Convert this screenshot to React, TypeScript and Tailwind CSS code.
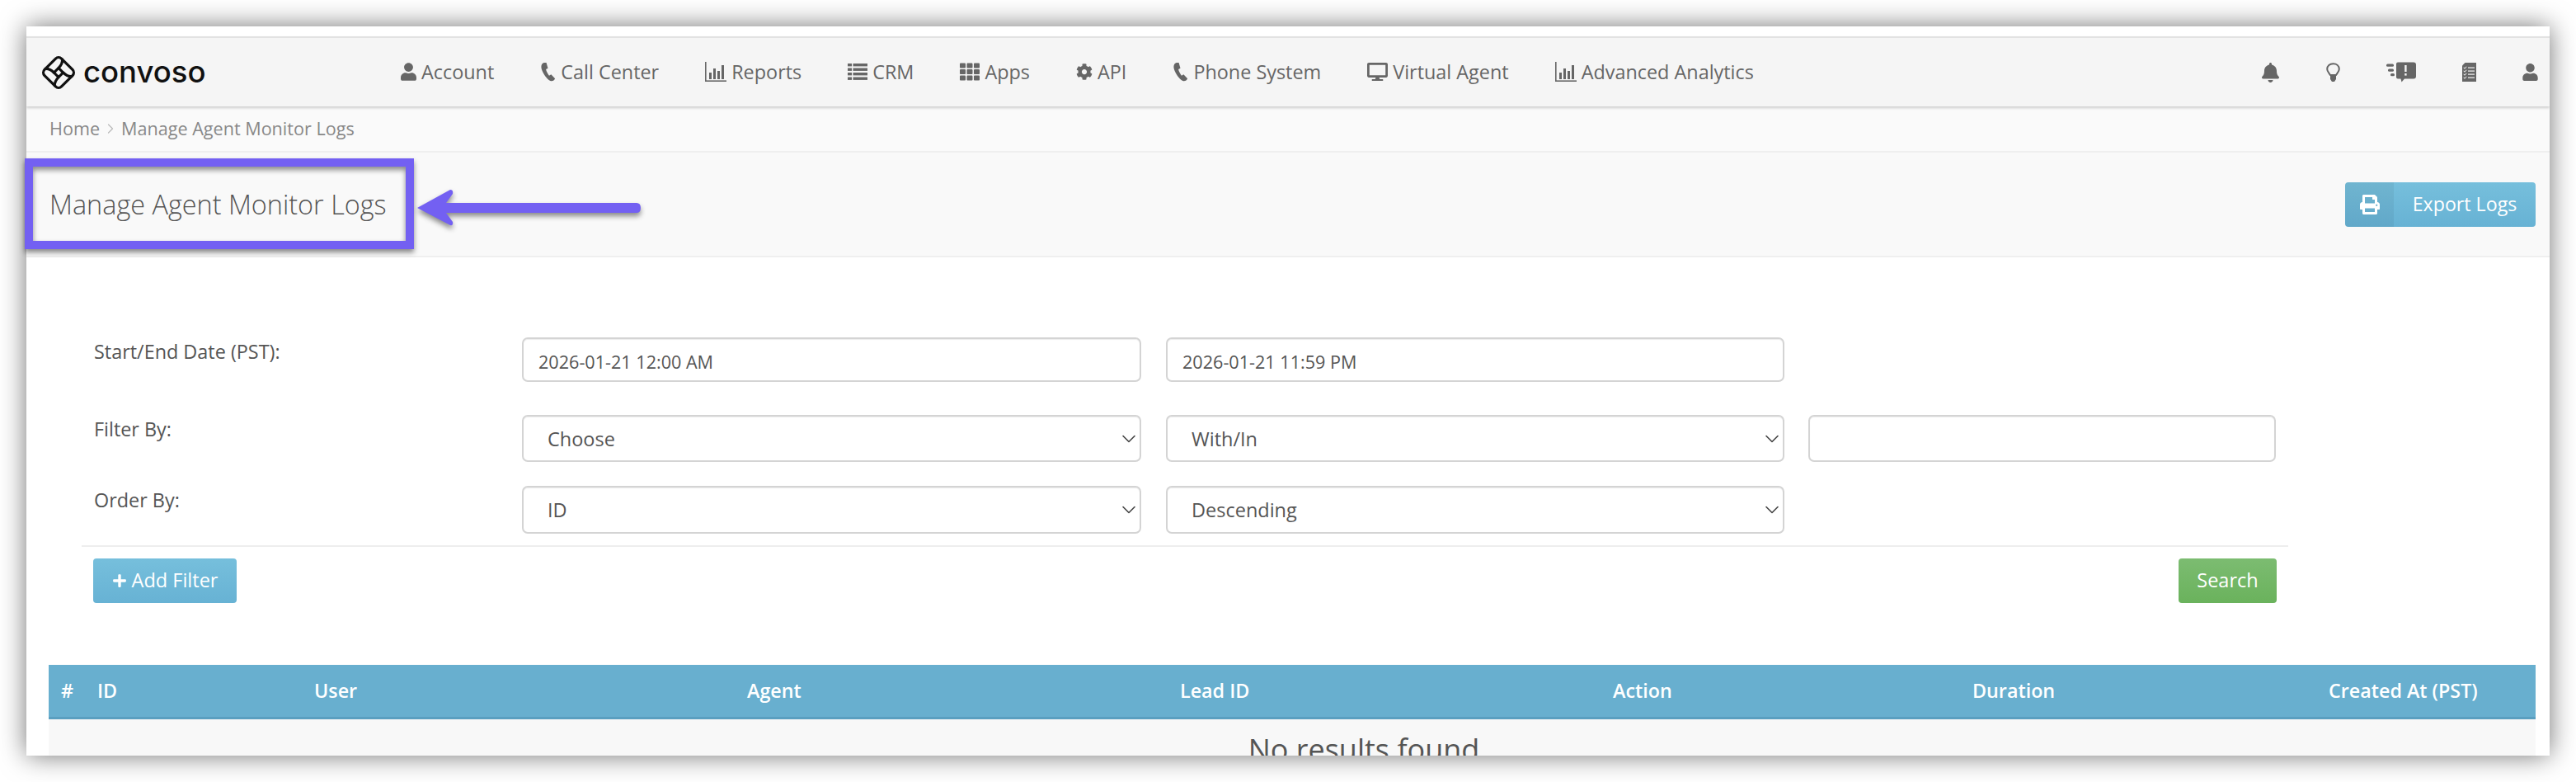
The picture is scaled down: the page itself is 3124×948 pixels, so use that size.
import {
  FaBell,
  FaCog,
  FaDesktop,
  FaPlus,
  FaPrint,
  FaTh,
  FaUser,
} from "react-icons/fa";
import { ChevronDown, ChevronRight } from "lucide-react";
import type { ComponentType } from "react";

type NavItem = {
  label: string;
  icon: ComponentType<{ className?: string }>;
  size: string;
};

function ListIcon({ className }: { className?: string }) {
  return (
    <svg viewBox="0 0 24 20" className={className} fill="currentColor">
      <rect x="0" y="0" width="5" height="3.4" />
      <rect x="6.5" y="0" width="17.5" height="3.4" />
      <rect x="0" y="5.5" width="5" height="3.4" />
      <rect x="6.5" y="5.5" width="17.5" height="3.4" />
      <rect x="0" y="11" width="5" height="3.4" />
      <rect x="6.5" y="11" width="17.5" height="3.4" />
      <rect x="0" y="16.5" width="5" height="3.4" />
      <rect x="6.5" y="16.5" width="17.5" height="3.4" />
    </svg>
  );
}

function BarsIcon({ className }: { className?: string }) {
  return (
    <svg viewBox="0 0 26 24" className={className} fill="currentColor">
      <rect x="0" y="0" width="1.6" height="24" />
      <rect x="0" y="22.4" width="26" height="1.6" />
      <rect x="5" y="13" width="3" height="8" />
      <rect x="10" y="8" width="3" height="13" />
      <rect x="15" y="11" width="3" height="10" />
      <rect x="20" y="4" width="3" height="17" />
    </svg>
  );
}

function CallIcon({ className }: { className?: string }) {
  return (
    <svg viewBox="0 0 18 25" className={className} fill="currentColor">
      <path d="M4 1 C1 2 0 5 1 9 C3 15 7 21 12 24 C15 25 17 23 18 21 L13 16 L10.5 17.5 C8.5 15 7 12 6.5 9.5 L9 8 L7 1 Z" />
    </svg>
  );
}

const navItems: NavItem[] = [
  { label: "Account", icon: FaUser, size: "h-[24px] w-[19px]" },
  { label: "Call Center", icon: CallIcon, size: "h-[24px] w-[19px]" },
  { label: "Reports", icon: BarsIcon, size: "h-[24px] w-[26px]" },
  { label: "CRM", icon: ListIcon, size: "h-[20px] w-[24px]" },
  { label: "Apps", icon: FaTh, size: "h-[24px] w-[24px]" },
  { label: "API", icon: FaCog, size: "h-[22px] w-[20px]" },
  { label: "Phone System", icon: CallIcon, size: "h-[24px] w-[19px]" },
  { label: "Virtual Agent", icon: FaDesktop, size: "h-[26px] w-[25px]" },
  { label: "Advanced Analytics", icon: BarsIcon, size: "h-[24px] w-[26px]" },
];

const columns = ["#", "ID", "User", "Agent", "Lead ID", "Action", "Duration", "Created At (PST)"];

function Logo() {
  return (
    <svg viewBox="0 0 44 44" className="h-[44px] w-[44px] shrink-0" fill="none" stroke="#111" strokeWidth="3.2" strokeLinecap="round">
      <g transform="rotate(45 22 22)">
        <rect x="7.5" y="7.5" width="29" height="29" rx="5" />
        <rect x="18" y="18" width="8" height="8" rx="1" />
        <path d="M18 18 C18 14 17 10 14 7.5" />
        <path d="M26 18 C30 18 34 17 36.5 14" />
        <path d="M26 26 C26 30 27 34 30 36.5" />
        <path d="M18 26 C14 26 10 27 7.5 30" />
      </g>
    </svg>
  );
}

function BulbIcon() {
  return (
    <svg viewBox="0 0 17 24" className="h-[24px] w-[17px]" fill="none" stroke="#666" strokeWidth="2">
      <path d="M5 15 C3 12 1.2 10.5 1.2 7.8 C1.2 3.8 4.4 1.2 8.5 1.2 C12.6 1.2 15.8 3.8 15.8 7.8 C15.8 10.5 14 12 12 15 Z" />
      <path d="M5 15 H12 V20 L10 23 H7 L5 20 Z" fill="#666" stroke="none" />
    </svg>
  );
}

function AlertsIcon() {
  return (
    <svg viewBox="0 0 36 25" className="h-[25px] w-[36px]" fill="#666">
      <rect x="0" y="2.5" width="9" height="3.2" rx="1.5" />
      <rect x="2" y="8.5" width="7" height="3.2" rx="1.5" />
      <rect x="5" y="14" width="5" height="3.2" rx="1.5" />
      <path d="M14 0.5h19a3 3 0 0 1 3 3v14a3 3 0 0 1-3 3H22l-3.5 4-1-4H14a2 2 0 0 1-2-2V2.5a2 2 0 0 1 2-2z" />
      <rect x="22.2" y="4" width="2.4" height="8" fill="#f5f5f5" />
      <rect x="22.2" y="14" width="2.4" height="2.6" fill="#f5f5f5" />
    </svg>
  );
}

function TasksIcon() {
  return (
    <svg viewBox="0 0 17 23" className="h-[23px] w-[17px]" fill="#666">
      <path d="M3.5 0H17v23H0V3.5z" />
      <g fill="#f5f5f5">
        <rect x="7" y="5.5" width="8" height="1.2" />
        <rect x="7" y="9.5" width="8" height="1.2" />
        <rect x="7" y="13.5" width="8" height="1.2" />
        <rect x="7" y="17.5" width="8" height="1.2" />
        <path d="M2 5.5l1 1 2-2 .6.6L3 7.8 1.4 6.1z" />
        <path d="M2 9.5l1 1 2-2 .6.6L3 11.8 1.4 10.1z" />
        <path d="M2 13.5l1 1 2-2 .6.6L3 15.8 1.4 14.1z" />
        <path d="M2 17.5l1 1 2-2 .6.6L3 19.8 1.4 18.1z" />
      </g>
    </svg>
  );
}

function Select({ value, className }: { value: string; className: string }) {
  return (
    <div className={`relative ${className}`}>
      <select
        defaultValue={value}
        className="h-full w-full appearance-none rounded-[7px] border-2 border-[#d4d4d4] bg-white pb-[1px] pl-[29px] pt-[3px] text-[23.5px] text-[#555] shadow-[inset_0_1px_1px_rgba(0,0,0,0.075)] outline-none"
      >
        <option>{value}</option>
      </select>
      <ChevronDown className="pointer-events-none absolute right-[1px] top-1/2 h-[28px] w-[28px] -translate-y-1/2 text-[#444]" strokeWidth={1.4} />
    </div>
  );
}

function TextInput({ value, className }: { value?: string; className: string }) {
  return (
    <input
      readOnly
      value={value ?? ""}
      className={`rounded-[7px] border-2 border-[#d4d4d4] bg-white pl-[18px] pt-[4px] text-[21.6px] text-[#555] shadow-[inset_0_1px_1px_rgba(0,0,0,0.075)] outline-none ${className}`}
    />
  );
}

export default function App() {
  return (
    <div className="h-[948px] w-[3124px] overflow-hidden bg-white p-[32px] font-['Open_Sans',sans-serif]">
      <div className="relative h-[884px] w-[3060px] bg-white shadow-[0_0_30px_rgba(0,0,0,0.55)]">
        <div className="flex h-full flex-col overflow-hidden">
          <div className="h-[12px] shrink-0" />
          {/* Top nav */}
          <div className="relative z-10 flex h-[85px] shrink-0 items-center border-t-2 border-[#e2e2e2] bg-[#f5f5f5] shadow-[0_2px_3px_rgba(0,0,0,0.18)]">
            <div className="ml-[17px] flex w-[437px] items-center gap-[8px]">
              <Logo />
              <span className="font-['Inter',sans-serif] text-[36.5px] font-medium leading-none text-[#111]">
                convoso
              </span>
            </div>
            <div className="flex items-center gap-[56px]">
              {navItems.map((item) => {
                const Icon = item.icon;
                return (
                  <div key={item.label} className="flex items-center gap-[6px] text-[23.4px] text-[#666]">
                    <Icon className={item.size} />
                    <span>{item.label}</span>
                  </div>
                );
              })}
            </div>
            <div className="ml-auto mr-[14px] flex items-center gap-[56px] text-[#666]">
              <FaBell className="h-[24px] w-[23px]" />
              <BulbIcon />
              <AlertsIcon />
              <TasksIcon />
              <FaUser className="h-[21px] w-[19px]" />
            </div>
          </div>

          {/* Breadcrumb */}
          <div className="flex h-[56px] shrink-0 items-center border-b-2 border-[#efefef] bg-[#fafafa] pl-[28px] text-[21.6px] text-[#888]">
            <span>Home</span>
            <ChevronRight className="mx-[3px] h-[20px] w-[20px] text-[#bbb]" strokeWidth={1.5} />
            <span>Manage Agent Monitor Logs</span>
          </div>

          {/* Page header */}
          <div className="flex h-[127px] shrink-0 items-center justify-between border-b-2 border-[#efefef] bg-[#f9f9f9] pl-[28px] pr-[17px]">
            <h1 className="text-[32.4px] font-light text-[#555]">Manage Agent Monitor Logs</h1>
            <button className="flex h-[54px] w-[231px] items-stretch overflow-hidden rounded-[4px] bg-gradient-to-b from-[#76bfdc] to-[#67b2d4] text-[23.2px] text-white">
              <span className="flex w-[59px] items-center justify-center bg-black/5">
                <FaPrint className="h-[24px] w-[24px]" />
              </span>
              <span className="flex flex-1 items-center justify-center">Export Logs</span>
            </button>
          </div>

          {/* Filter form */}
          <div className="relative flex flex-col pt-[97px] text-[23.4px] text-[#555]">
            <div className="flex h-[54px] items-start">
              <label className="ml-[82px] w-[519px]">Start/End Date (PST):</label>
              <TextInput value="2026-01-21 12:00 AM" className="h-[54px] w-[751px]" />
              <TextInput value="2026-01-21 11:59 PM" className="ml-[30px] h-[54px] w-[750px]" />
            </div>
            <div className="mt-[40px] flex h-[57px] items-start">
              <label className="ml-[82px] w-[519px]">Filter By:</label>
              <Select value="Choose" className="h-[57px] w-[751px]" />
              <Select value="With/In" className="ml-[30px] h-[57px] w-[750px]" />
              <TextInput className="ml-[29px] h-[57px] w-[567px]" />
            </div>
            <div className="mt-[29px] flex h-[58px] items-start">
              <label className="ml-[82px] w-[519px]">Order By:</label>
              <Select value="ID" className="h-[58px] w-[751px]" />
              <Select value="Descending" className="ml-[30px] h-[58px] w-[750px]" />
            </div>
            <div className="ml-[67px] mt-[14px] h-[2px] w-[2676px] bg-[#eeeeee]" />
            <div className="ml-[81px] mt-[14px] flex w-[2648px] items-center justify-between">
              <button className="flex h-[54px] w-[174px] items-center justify-center gap-[6px] rounded-[4px] bg-gradient-to-b from-[#76bfdc] to-[#67b2d4] text-[23.5px] text-white">
                <FaPlus className="h-[18px] w-[18px]" />
                Add Filter
              </button>
              <button className="h-[54px] w-[119px] rounded-[4px] bg-gradient-to-b from-[#7cbc71] to-[#6ab25c] text-[23.5px] text-white">
                Search
              </button>
            </div>

            {/* Results table */}
            <div className="ml-[27px] mt-[75px] w-[3016px]">
              <div className="grid h-[66px] grid-cols-[44px_263px_525px_525px_525px_436px_432px_1fr] items-center border-b-[3px] border-[#5a9fc0] bg-[#68afcf] pl-[15px] text-[23.3px] font-semibold text-white">
                {columns.map((c) => (
                  <span key={c}>{c}</span>
                ))}
              </div>
              <div className="h-[60px] bg-[#f8f8f8] pl-[174px] pt-[12px] text-center text-[36px] leading-[50px] text-[#555]">
                No results found
              </div>
            </div>
          </div>
        </div>

        {/* Annotation over the page title */}
        <div className="absolute left-[-2px] top-[160px] h-[110px] w-[472px] border-[10px] border-[#7360f2] shadow-[0_4px_6px_rgba(0,0,0,0.45),inset_0_4px_6px_rgba(0,0,0,0.45)]" />
        <svg viewBox="0 0 275 50" className="absolute left-[472px] top-[195px] h-[50px] w-[275px] drop-shadow-[0_4px_3px_rgba(0,0,0,0.45)]">
          <path d="M2 25 L42 3 Q46 3 45 8 L37 19 H268 Q273 19 273 25 Q273 31 268 31 H37 L45 42 Q46 47 42 46 Z" fill="#7360f2" />
        </svg>
      </div>
    </div>
  );
}
